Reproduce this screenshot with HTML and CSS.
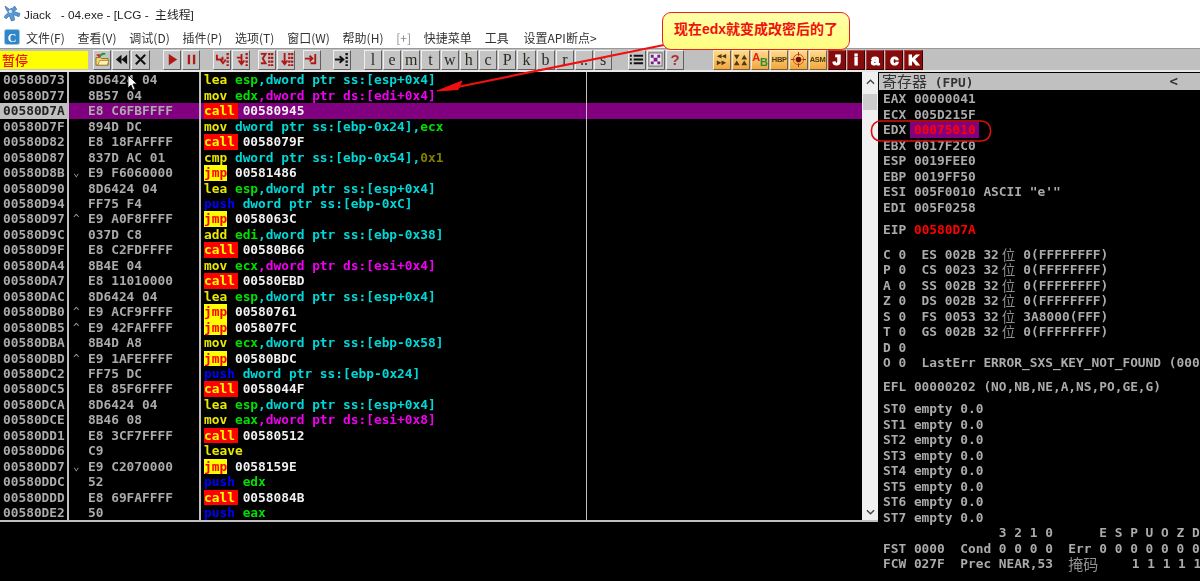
FILE: index.html
```html
<!DOCTYPE html>
<html lang="zh">
<head>
<meta charset="utf-8">
<title>Jiack - 04.exe</title>
<link rel="stylesheet" href="styles.css">
</head>
<body>
<div class="app">
  <header class="titlebar">
    <svg class="title-icon" viewBox="0 0 16 16"><path d="M1 1l4 3 3-1 2-2 2 3-3 2 6 2-1 3-5-2 1 5-3 1-2-5-3 3-2-2 4-4-2-3z" fill="#5b9bd5" stroke="#2a5c96" stroke-width=".6"/><circle cx="6" cy="6" r="1.500" fill="#dbe9f7"/></svg>
    <span class="title-text">Jiack&nbsp;&nbsp; - 04.exe - [LCG -&nbsp; 主线程]</span>
  </header>
  <nav class="menubar">
    <svg class="menu-icon" viewBox="0 0 16 16"><rect x=".5" y=".5" width="15" height="15" rx="2" fill="#2f86c9" stroke="#9cc9ea"/><text x="8" y="12.500" text-anchor="middle" class="menu-icon-c">C</text></svg>
    <span class="menu-item m1">文件(F)</span>
    <span class="menu-item">查看(V)</span>
    <span class="menu-item">调试(D)</span>
    <span class="menu-item">插件(P)</span>
    <span class="menu-item">选项(T)</span>
    <span class="menu-item">窗口(W)</span>
    <span class="menu-item">帮助(H)</span>
    <span class="menu-item muted">[+]</span>
    <span class="menu-item">快捷菜单</span>
    <span class="menu-item">工具</span>
    <span class="menu-item m-last">设置API断点&gt;</span>
  </nav>
  <div class="toolbar">
    <div class="status">暂停</div>
    <div class="tgroup g1">
      <span class="btn"><svg viewBox="0 0 16 16"><path d="M1 6h5l1 1h7v7H1z" fill="#f7d774" stroke="#8a6a1a"/><path d="M3 14l2-5h10l-2 5z" fill="#fff0b0" stroke="#8a6a1a" stroke-width=".7"/><path d="M5 5q2-4 6-3" fill="none" stroke="#1c9a2e" stroke-width="2"/><path d="M1 3l4-1 0 4z" fill="#d02020"/></svg></span>
      <span class="btn"><svg viewBox="0 0 16 16"><path d="M8 3v10L2 8zM14 3v10L8 8z" fill="#111"/></svg></span>
      <span class="btn"><svg viewBox="0 0 16 16"><path d="M3 3l10 10M13 3L3 13" stroke="#111" stroke-width="2.200"/></svg></span>
    </div>
    <div class="tgroup g2">
      <span class="btn"><svg viewBox="0 0 16 16"><path d="M4 2l9 6-9 6z" fill="#b01818"/></svg></span>
      <span class="btn"><svg viewBox="0 0 16 16"><path d="M4 3h2.500v10H4zM9.500 3H12v10H9.500z" fill="#b01818"/></svg></span>
    </div>
    <div class="tgroup g3">
      <span class="btn"><svg viewBox="0 0 16 16"><path class="redline" d="M2 3v5h6V5M5.500 8l3 4 3-4"/><path class="reddots" d="M13.500 1v14"/></svg></span>
      <span class="btn"><svg viewBox="0 0 16 16"><path class="redline" d="M8 2v10M3 6h5M5 9l3 4 3-4"/><path class="reddots" d="M13.500 1v14"/></svg></span>
    </div>
    <div class="tgroup g4">
      <span class="btn"><svg viewBox="0 0 16 16"><path class="redline" d="M2 2h5l-3 5 3 5H2"/><path class="reddots" d="M11 1v14M14 1v14"/></svg></span>
      <span class="btn"><svg viewBox="0 0 16 16"><path class="redline" d="M6 1v11M3 9l3 4 3-4"/><path class="reddots" d="M11 1v14M14 1v14"/></svg></span>
    </div>
    <div class="tgroup g5">
      <span class="btn"><svg viewBox="0 0 16 16"><path class="redline" d="M12 2v10H7M1 7h8M6 4l3 3-3 3"/></svg></span>
    </div>
    <div class="tgroup g6">
      <span class="btn"><svg viewBox="0 0 16 16"><path d="M1 8h8M6 4.500L10 8l-4 3.500" fill="none" stroke="#111" stroke-width="2"/><path d="M13.500 1v14" stroke="#111" stroke-width="2.500" stroke-dasharray="2.500 1.500"/></svg></span>
    </div>
    <div class="tgroup g7">
      <span class="btn letter">l</span><span class="btn letter">e</span><span class="btn letter">m</span><span class="btn letter">t</span><span class="btn letter">w</span><span class="btn letter">h</span><span class="btn letter">c</span><span class="btn letter">P</span><span class="btn letter">k</span><span class="btn letter">b</span><span class="btn letter">r</span><span class="btn letter">..</span><span class="btn letter">s</span>
    </div>
    <div class="tgroup g8">
      <span class="btn"><svg viewBox="0 0 16 16"><path d="M1 3h2v2H1zM1 7h2v2H1zM1 11h2v2H1zM5 3h10v2H5zM5 7h10v2H5zM5 11h10v2H5z" fill="#111"/></svg></span>
      <span class="btn"><svg viewBox="0 0 16 16"><rect x="1" y="1" width="14" height="14" fill="#e8e8e8" stroke="#666"/><path d="M3 3h3v3H3zM10 3h3v3h-3zM6 6h4v4H6zM3 10h3v3H3zM10 10h3v3h-3z" fill="#7a1a8c"/></svg></span>
      <span class="btn help">?</span>
    </div>
    <div class="tgroup g9">
      <span class="btn orange"><svg viewBox="0 0 16 16"><path d="M8 2v5L3 4.500zM13 2v5L8 4.500zM3 9v5l5-2.500zM8 9v5l5-2.500z" fill="#4d3a10"/></svg></span>
      <span class="btn orange"><svg viewBox="0 0 16 16"><path d="M1 3h6L4 8zM9 8h6l-3-5zM1 14h6L4 9zM9 14h6l-3-5z" fill="#4d3a10"/></svg></span>
      <span class="btn orange ab"><b class="ab-a">A</b><b class="ab-b">B</b></span>
      <span class="btn orange tiny">HBP</span>
      <span class="btn orange"><svg viewBox="0 0 16 16"><circle cx="8" cy="8" r="5.500" fill="none" stroke="#d05010"/><circle cx="8" cy="8" r="3" fill="#701010"/><path d="M8 0v4M8 12v4M0 8h4M12 8h4" stroke="#a03010"/></svg></span>
      <span class="btn orange tiny">ASM</span>
      <span class="btn jiack">J</span><span class="btn jiack">i</span><span class="btn jiack">a</span><span class="btn jiack">c</span><span class="btn jiack">K</span>
    </div>
  </div>
  <main class="workspace">
    <div class="left">
      <div class="cpu">
        <div class="disasm">
          <div class="row"><span class="addr">00580D73</span><span class="mark"></span><span class="hex">8D6424 04</span><span class="code"><i class="y">lea</i> <i class="g">esp</i><i class="c">,dword ptr ss:[esp+0x4]</i></span><span class="note"></span></div>
          <div class="row"><span class="addr">00580D77</span><span class="mark"></span><span class="hex">8B57 04</span><span class="code"><i class="y">mov</i> <i class="g">edx</i><i class="m">,dword ptr ds:[edi+0x4]</i></span><span class="note"></span></div>
          <div class="row sel"><span class="addr">00580D7A</span><span class="mark"></span><span class="hex">E8 C6FBFFFF</span><span class="code"><i class="call">call</i> <i class="w">00580945</i></span><span class="note"></span></div>
          <div class="row"><span class="addr">00580D7F</span><span class="mark"></span><span class="hex">894D DC</span><span class="code"><i class="y">mov</i> <i class="c">dword ptr ss:[ebp-0x24],</i><i class="g">ecx</i></span><span class="note"></span></div>
          <div class="row"><span class="addr">00580D82</span><span class="mark"></span><span class="hex">E8 18FAFFFF</span><span class="code"><i class="call">call</i> <i class="w">0058079F</i></span><span class="note"></span></div>
          <div class="row"><span class="addr">00580D87</span><span class="mark"></span><span class="hex">837D AC 01</span><span class="code"><i class="y">cmp</i> <i class="c">dword ptr ss:[ebp-0x54],</i><i class="o">0x1</i></span><span class="note"></span></div>
          <div class="row"><span class="addr">00580D8B</span><span class="mark">⌄</span><span class="hex">E9 F6060000</span><span class="code"><i class="jmp">jmp</i> <i class="w">00581486</i></span><span class="note"></span></div>
          <div class="row"><span class="addr">00580D90</span><span class="mark"></span><span class="hex">8D6424 04</span><span class="code"><i class="y">lea</i> <i class="g">esp</i><i class="c">,dword ptr ss:[esp+0x4]</i></span><span class="note"></span></div>
          <div class="row"><span class="addr">00580D94</span><span class="mark"></span><span class="hex">FF75 F4</span><span class="code"><i class="b">push</i> <i class="c">dword ptr ss:[ebp-0xC]</i></span><span class="note"></span></div>
          <div class="row"><span class="addr">00580D97</span><span class="mark">^</span><span class="hex">E9 A0F8FFFF</span><span class="code"><i class="jmp">jmp</i> <i class="w">0058063C</i></span><span class="note"></span></div>
          <div class="row"><span class="addr">00580D9C</span><span class="mark"></span><span class="hex">037D C8</span><span class="code"><i class="y">add</i> <i class="g">edi</i><i class="c">,dword ptr ss:[ebp-0x38]</i></span><span class="note"></span></div>
          <div class="row"><span class="addr">00580D9F</span><span class="mark"></span><span class="hex">E8 C2FDFFFF</span><span class="code"><i class="call">call</i> <i class="w">00580B66</i></span><span class="note"></span></div>
          <div class="row"><span class="addr">00580DA4</span><span class="mark"></span><span class="hex">8B4E 04</span><span class="code"><i class="y">mov</i> <i class="g">ecx</i><i class="m">,dword ptr ds:[esi+0x4]</i></span><span class="note"></span></div>
          <div class="row"><span class="addr">00580DA7</span><span class="mark"></span><span class="hex">E8 11010000</span><span class="code"><i class="call">call</i> <i class="w">00580EBD</i></span><span class="note"></span></div>
          <div class="row"><span class="addr">00580DAC</span><span class="mark"></span><span class="hex">8D6424 04</span><span class="code"><i class="y">lea</i> <i class="g">esp</i><i class="c">,dword ptr ss:[esp+0x4]</i></span><span class="note"></span></div>
          <div class="row"><span class="addr">00580DB0</span><span class="mark">^</span><span class="hex">E9 ACF9FFFF</span><span class="code"><i class="jmp">jmp</i> <i class="w">00580761</i></span><span class="note"></span></div>
          <div class="row"><span class="addr">00580DB5</span><span class="mark">^</span><span class="hex">E9 42FAFFFF</span><span class="code"><i class="jmp">jmp</i> <i class="w">005807FC</i></span><span class="note"></span></div>
          <div class="row"><span class="addr">00580DBA</span><span class="mark"></span><span class="hex">8B4D A8</span><span class="code"><i class="y">mov</i> <i class="g">ecx</i><i class="c">,dword ptr ss:[ebp-0x58]</i></span><span class="note"></span></div>
          <div class="row"><span class="addr">00580DBD</span><span class="mark">^</span><span class="hex">E9 1AFEFFFF</span><span class="code"><i class="jmp">jmp</i> <i class="w">00580BDC</i></span><span class="note"></span></div>
          <div class="row"><span class="addr">00580DC2</span><span class="mark"></span><span class="hex">FF75 DC</span><span class="code"><i class="b">push</i> <i class="c">dword ptr ss:[ebp-0x24]</i></span><span class="note"></span></div>
          <div class="row"><span class="addr">00580DC5</span><span class="mark"></span><span class="hex">E8 85F6FFFF</span><span class="code"><i class="call">call</i> <i class="w">0058044F</i></span><span class="note"></span></div>
          <div class="row"><span class="addr">00580DCA</span><span class="mark"></span><span class="hex">8D6424 04</span><span class="code"><i class="y">lea</i> <i class="g">esp</i><i class="c">,dword ptr ss:[esp+0x4]</i></span><span class="note"></span></div>
          <div class="row"><span class="addr">00580DCE</span><span class="mark"></span><span class="hex">8B46 08</span><span class="code"><i class="y">mov</i> <i class="g">eax</i><i class="m">,dword ptr ds:[esi+0x8]</i></span><span class="note"></span></div>
          <div class="row"><span class="addr">00580DD1</span><span class="mark"></span><span class="hex">E8 3CF7FFFF</span><span class="code"><i class="call">call</i> <i class="w">00580512</i></span><span class="note"></span></div>
          <div class="row"><span class="addr">00580DD6</span><span class="mark"></span><span class="hex">C9</span><span class="code"><i class="y">leave</i></span><span class="note"></span></div>
          <div class="row"><span class="addr">00580DD7</span><span class="mark">⌄</span><span class="hex">E9 C2070000</span><span class="code"><i class="jmp">jmp</i> <i class="w">0058159E</i></span><span class="note"></span></div>
          <div class="row"><span class="addr">00580DDC</span><span class="mark"></span><span class="hex">52</span><span class="code"><i class="b">push</i> <i class="g">edx</i></span><span class="note"></span></div>
          <div class="row"><span class="addr">00580DDD</span><span class="mark"></span><span class="hex">E8 69FAFFFF</span><span class="code"><i class="call">call</i> <i class="w">0058084B</i></span><span class="note"></span></div>
          <div class="row"><span class="addr">00580DE2</span><span class="mark"></span><span class="hex">50</span><span class="code"><i class="b">push</i> <i class="g">eax</i></span><span class="note"></span></div>
        </div>
        <div class="scrollbar">
          <svg class="chev" viewBox="0 0 10 6"><path d="M1 5l4-4 4 4" fill="none" stroke="#444" stroke-width="1.500"/></svg>
          <div class="thumb"></div>
          <svg class="chev down" viewBox="0 0 10 6"><path d="M1 1l4 4 4-4" fill="none" stroke="#444" stroke-width="1.500"/></svg>
        </div>
      </div>
      <div class="dump"></div>
    </div>
    <aside class="regs">
      <div class="regs-title"><span><span class="regs-cjk">寄存器</span> (FPU)</span><span class="regs-arrow">&lt;</span></div>
      <div class="reg-body">
        <div class="rg">EAX 00000041</div>
        <div class="rg">ECX 005D215F</div>
        <div class="rg">EDX <span class="changed">00075010</span></div>
        <div class="rg">EBX 0017F2C0</div>
        <div class="rg">ESP 0019FEE0</div>
        <div class="rg">EBP 0019FF50</div>
        <div class="rg">ESI 005F0010 ASCII "e'"</div>
        <div class="rg">EDI 005F0258</div>
        <div class="rg sep1">EIP <span class="eip">00580D7A</span></div>
        <div class="rg sep2">C 0  ES 002B 32<span class="wei">位</span>0(FFFFFFFF)</div>
        <div class="rg">P 0  CS 0023 32<span class="wei">位</span>0(FFFFFFFF)</div>
        <div class="rg">A 0  SS 002B 32<span class="wei">位</span>0(FFFFFFFF)</div>
        <div class="rg">Z 0  DS 002B 32<span class="wei">位</span>0(FFFFFFFF)</div>
        <div class="rg">S 0  FS 0053 32<span class="wei">位</span>3A8000(FFF)</div>
        <div class="rg">T 0  GS 002B 32<span class="wei">位</span>0(FFFFFFFF)</div>
        <div class="rg">D 0</div>
        <div class="rg">O 0  LastErr ERROR_SXS_KEY_NOT_FOUND (000</div>
        <div class="rg sep3">EFL 00000202 (NO,NB,NE,A,NS,PO,GE,G)</div>
        <div class="rg sep4">ST0 empty 0.0</div>
        <div class="rg">ST1 empty 0.0</div>
        <div class="rg">ST2 empty 0.0</div>
        <div class="rg">ST3 empty 0.0</div>
        <div class="rg">ST4 empty 0.0</div>
        <div class="rg">ST5 empty 0.0</div>
        <div class="rg">ST6 empty 0.0</div>
        <div class="rg">ST7 empty 0.0</div>
        <div class="rg">               3 2 1 0      E S P U O Z D</div>
        <div class="rg">FST 0000  Cond 0 0 0 0  Err 0 0 0 0 0 0 0</div>
        <div class="rg">FCW 027F  Prec NEAR,53  <span class="mask">掩码</span>    1 1 1 1 1</div>
      </div>
    </aside>
  </main>
</div>

<svg class="annot" viewBox="0 0 1200 581">
  <path d="M664 45L450 88.500" stroke="#f01010" stroke-width="2.200" fill="none"/>
  <path d="M437 91L462 81L458 89.500z" fill="#f01010" stroke="#f01010"/>
  <rect x="871.500" y="121" width="119" height="20" rx="9" fill="none" stroke="#d81010" stroke-width="1.600"/>
  <path class="cursor" d="M128 75v13l3-3 2 5 2-1-2-5h4z"/>
</svg>
<div class="callout">现在edx就变成改密后的了</div>
</body>
</html>
```
FILE: styles.css
```css
* { box-sizing: border-box; }
html, body { margin: 0; padding: 0; }
body {
  width: 1200px;
  height: 581px;
  overflow: hidden;
  position: relative;
  background: #fff;
  font-family: "Noto Sans CJK SC", "Liberation Sans", sans-serif;
}
.app { display: flex; flex-direction: column; height: 581px; filter: blur(.3px); }

.titlebar { height: 26px; display: flex; align-items: center; padding: 0 0 0 4px; gap: 3px; background: #fff; }
.title-icon { width: 17px; height: 17px; }
.title-text { font-size: 11.8px; color: #222; font-family: "Liberation Sans", "Noto Sans CJK SC", sans-serif; white-space: pre; }

.menubar { height: 22px; display: flex; align-items: center; padding-left: 4px; background: #fff; gap: 12.8px; }
.menu-icon { width: 16px; height: 16px; }
.menu-icon-c { font: bold 12px "Liberation Serif", serif; fill: #fff; }
.menu-item { font-size: 12px; color: #333; white-space: nowrap; }
.menu-item.m1 { margin-left: -6.8px; }
.menu-item.m-last { margin-left: 2px; }
.menu-item.muted { color: #888; }

.toolbar { height: 24px; background: #c0c0c0; border-top: 1px solid #999; border-bottom: 2px solid #e8e8e8; display: flex; align-items: center; }
.status { width: 88px; height: 18px; background: #ffff00; color: #f01010; font-size: 13px; font-weight: 500; line-height: 18px; padding-left: 2px; flex: none; }
.tgroup { display: flex; gap: 1px; flex: none; }
.g1 { margin-left: 5px; }
.g2 { margin-left: 13.4px; }
.g3 { margin-left: 12.6px; }
.g4 { margin-left: 7.6px; }
.g5 { margin-left: 7.6px; }
.g6 { margin-left: 11.8px; }
.g7 { margin-left: 12.8px; }
.g8 { margin-left: 15.4px; }
.g9 { margin-left: 28.4px; }
.btn {
  width: 18.2px; height: 20px; flex: none;
  display: flex; align-items: center; justify-content: center;
  background: #c4c4c4;
  border: 1px solid; border-color: #f0f0f0 #606060 #606060 #f0f0f0;
  overflow: hidden;
}
.btn svg { width: 15px; height: 15px; display: block; }
.redline { fill: none; stroke: #b01818; stroke-width: 2; }
.reddots { fill: none; stroke: #b01818; stroke-width: 2.5; stroke-dasharray: 2.5 1.5; }
.letter { font: 16px/18px "Liberation Serif", serif; color: #2e2a20; }
.help { font: bold 15px/18px "Liberation Sans", sans-serif; color: #b03030; }
.orange { background: linear-gradient(#ffd98a, #f0a840); border-color: #ffe9c0 #806030 #806030 #ffe9c0; }
.tiny { font: bold 7.5px/18px "Liberation Sans", sans-serif; color: #4d3a10; letter-spacing: -.3px; }
.ab { font: bold 11px/18px "Liberation Sans", sans-serif; }
.ab-a { color: #e02020; margin-top: -5px; }
.ab-b { color: #209040; margin-top: 5px; }
.jiack { background: #840c0c; color: #fff; font: 900 15px/18px "Liberation Sans", sans-serif; -webkit-text-stroke: 1.2px #fff; border-color: #b04040 #400000 #400000 #b04040; }

.workspace { flex: 1; display: flex; min-height: 0; background: #000; }
.left { width: 878px; display: flex; flex-direction: column; flex: none; }
.cpu { height: 450px; display: flex; flex: none; border-bottom: 2px solid #c0c0c0; }
.dump { flex: 1; background: #000; }
.disasm { width: 862px; flex: none; background: #000; padding-top: .4px; overflow: hidden; }
.row {
  height: 15.46px;
  display: grid;
  grid-template-columns: 69px 19px 113px 386px 1fr;
  font: bold 12.84px/15.46px "DejaVu Sans Mono", monospace;
  color: #ababab;
  white-space: pre;
}
.row > span { display: block; height: 15.46px; overflow: hidden; }
.addr { padding-left: 3px; border-right: 2px solid #c0c0c0; }
.mark { padding-left: 4px; font-weight: normal; color: #a0a0a0; font-size: 11px; }
.hex { border-right: 2px solid #c0c0c0; }
.code { padding-left: 3px; border-right: 1px solid #c0c0c0; }
.code i { font-style: normal; }
.sel { background: #800080; }
.sel .addr { background: #c0c0c0; color: #222; }
.y { color: #e8e800; }
.g { color: #00e000; }
.c { color: #00d8d8; }
.m { color: #f000f0; }
.b { color: #0000ff; }
.w { color: #f0f0f0; }
.o { color: #808000; }
.call { background: #ff0000; color: #ffff00; display: inline-block; padding-right: 3px; margin-right: -3px; }
.jmp { background: #ffff00; color: #ff0000; display: inline-block; }

.scrollbar { flex: 1; background: #f0f0f0; display: flex; flex-direction: column; align-items: center; padding-top: 7px; }
.chev { width: 9px; height: 6px; flex: none; }
.thumb { width: 14px; height: 16px; margin-top: 9px; background: #cdcdcd; flex: none; }
.chev.down { margin-top: auto; margin-bottom: 5px; }

.regs { width: 322px; flex: none; background: #000; padding: 1px 0 0 1px; overflow: hidden; }
.regs-title {
  height: 17px; background: #c0c0c0; display: flex; justify-content: space-between; align-items: center;
  padding: 0 22px 0 3px; color: #333;
  font: bold 12.84px/17px "DejaVu Sans Mono", monospace;
}
.regs-cjk { font: 15px/17px "Noto Sans CJK SC", sans-serif; }
.regs-arrow { font-size: 14px; }
.reg-body { padding: 1px 0 0 4px; }
.rg {
  height: 15.5px;
  font: bold 12.84px/15.5px "DejaVu Sans Mono", monospace;
  color: #ababab;
  white-space: pre;
}
.changed { background: #800080; color: #ff0000; padding: 2px 3px 2px 4px; margin-left: -4px; display: inline-block; line-height: 11.5px; }
.eip { color: #ff0000; }
.sep1 { margin-top: 7px; }
.sep2 { margin-top: 9px; }
.sep3 { margin-top: 8px; }
.sep4 { margin-top: 7px; }
.wei { display: inline-block; width: 24.5px; height: 15.5px; padding-left: 3px; font: 13.5px/15.5px "Noto Sans CJK SC", sans-serif; color: #909090; vertical-align: top; }
.mask { display: inline-block; width: 32.5px; height: 15.5px; font: 15px/15.5px "Noto Sans CJK SC", sans-serif; color: #909090; vertical-align: top; }

.annot { position: absolute; left: 0; top: 0; width: 1200px; height: 581px; pointer-events: none; }
.cursor { fill: #fff; stroke: #111; stroke-width: .8; }
.callout {
  position: absolute; left: 662px; top: 12px; width: 188px; height: 38px;
  background: linear-gradient(#ffffa8, #ffff80);
  border: 1.5px solid #f02020; border-radius: 9px;
  color: #f01010; font: bold 14px/33px "Liberation Sans", "Noto Sans CJK SC", sans-serif;
  text-align: center;
}
```
